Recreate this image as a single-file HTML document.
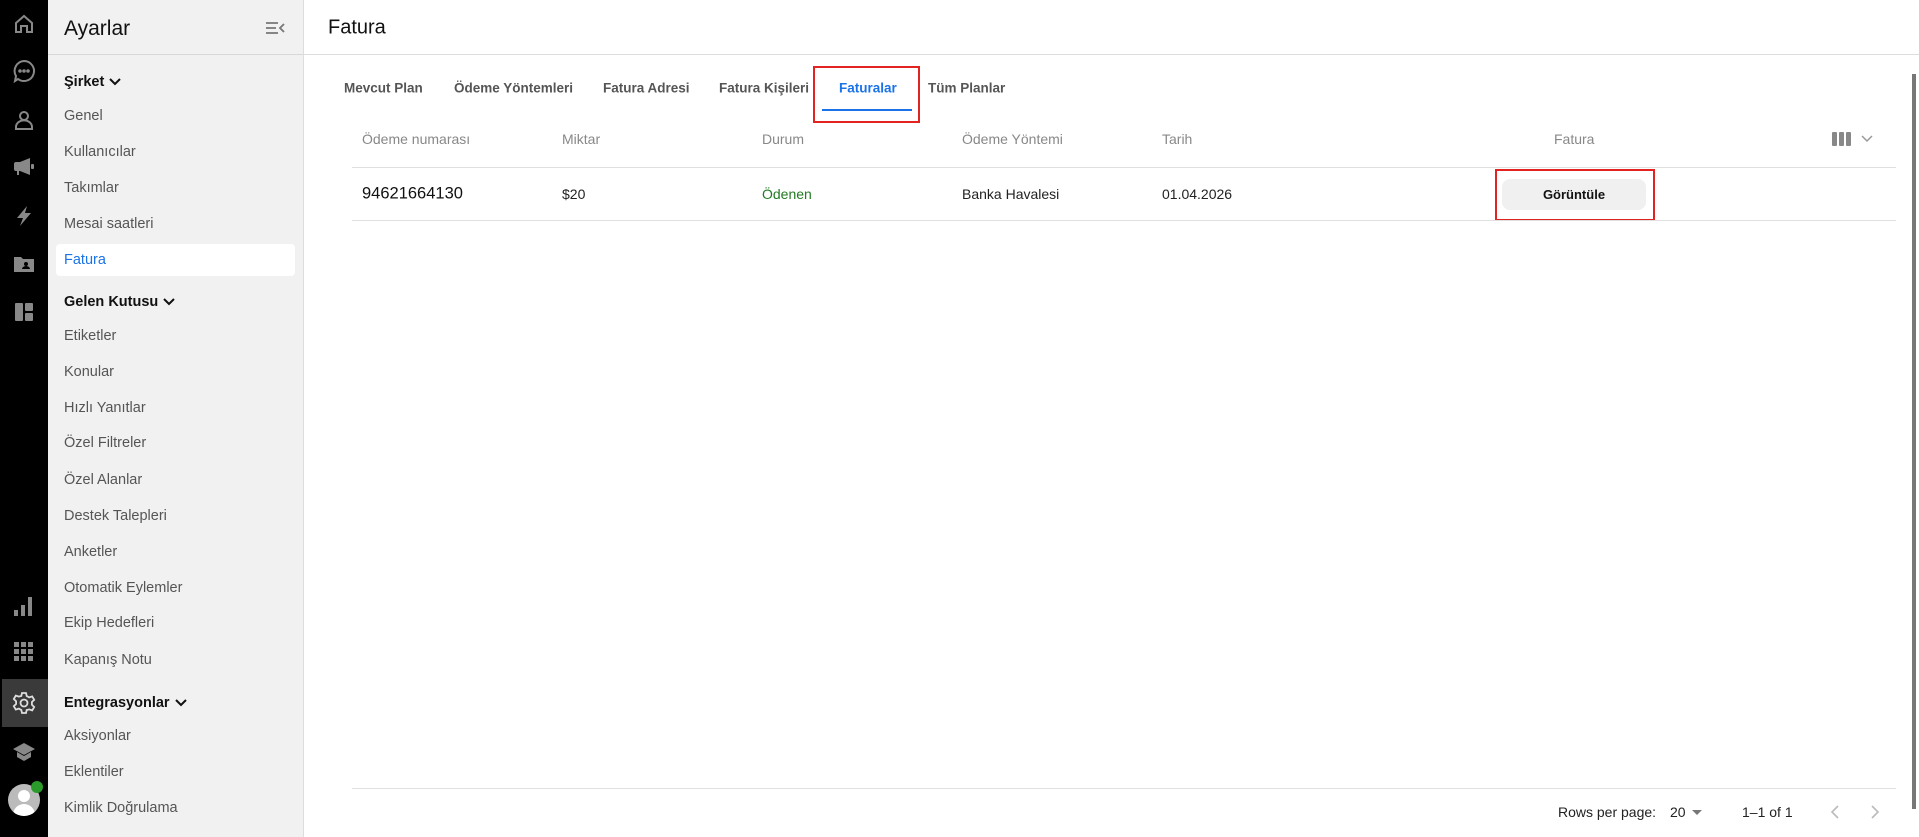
<!DOCTYPE html>
<html><head><meta charset="utf-8"><style>
*{margin:0;padding:0;box-sizing:border-box}
body{width:1919px;height:837px;overflow:hidden;font-family:"Liberation Sans",Roboto,sans-serif;background:#fff;position:relative}
.bar{position:absolute;left:0;top:0;width:48px;height:837px;background:#000}
.bar svg{position:absolute;left:12px}
.side{position:absolute;left:48px;top:0;width:256px;height:837px;background:#f1f1f1;border-right:1px solid #ddd}
.side .h{position:absolute;left:16px;top:17px;font-size:21px;color:#111}
.side .hl{position:absolute;left:0;top:54px;width:255px;height:1px;background:#d8d8d8}
.it{position:absolute;left:16px;font-size:14.5px;color:#555;transform:translateY(-50%)}
.sec{position:absolute;left:16px;font-size:14.5px;color:#111;font-weight:bold;transform:translateY(-50%)}
.sec svg{margin-left:5px;vertical-align:middle}
.sel{position:absolute;left:8px;top:244px;width:239px;height:32px;background:#fff;border-radius:4px}
.t{position:absolute;transform:translateY(-50%);white-space:nowrap}
.tab{font-size:13.5px;font-weight:bold;color:#555}
.th{font-size:14px;color:#888}
.td{font-size:14px;color:#222}
.line{position:absolute;height:1px;background:#e0e0e0}
</style></head><body>
<div class="bar">
<svg style="top:12px" width="24" height="24" viewBox="0 0 24 24" fill="none" stroke="#888" stroke-width="2"><path d="M4 11 12 4l8 7v9h-5v-6h-6v6H4z"/></svg>
<svg style="top:59px" width="24" height="24" viewBox="0 0 24 24" fill="none" stroke="#888" stroke-width="2"><path d="M12 2a10 10 0 1 1-6 18l-3 2 1-5A10 10 0 0 1 12 2z"/><circle cx="8" cy="12" r=".8" fill="#888"/><circle cx="12" cy="12" r=".8" fill="#888"/><circle cx="16" cy="12" r=".8" fill="#888"/></svg>
<svg style="top:108px" width="24" height="24" viewBox="0 0 24 24" fill="none" stroke="#888" stroke-width="2"><circle cx="12" cy="8" r="4"/><path d="M4 21v-2a6 5 0 0 1 16 0v2z"/></svg>
<svg style="top:155px" width="24" height="24" viewBox="0 0 24 24" fill="#888"><path d="M2 9a2 2 0 0 1 2-2h4l10-4v17L8 16H7v4H5v-4H4a2 2 0 0 1-2-2z"/><rect x="19" y="9" width="3" height="5" rx="1"/></svg>
<svg style="top:204px" width="24" height="24" viewBox="0 0 24 24" fill="#888"><path d="M15 2 5 14h6l-3 8 11-13h-6z"/></svg>
<svg style="top:252px" width="24" height="24" viewBox="0 0 24 24" fill="#888"><path d="M2 5h7l2 2h11v13H2z"/><circle cx="14" cy="12" r="2" fill="#000"/><path d="M10 17a4 3 0 0 1 8 0z" fill="#000"/></svg>
<svg style="top:300px" width="24" height="24" viewBox="0 0 24 24" fill="#888"><rect x="3" y="3" width="8" height="18" rx="1"/><rect x="13" y="3" width="8" height="8" rx="1"/><rect x="13" y="13" width="8" height="8" rx="1"/></svg>
<svg style="top:594px" width="24" height="24" viewBox="0 0 24 24" fill="#888"><rect x="2" y="16" width="4" height="6"/><rect x="9" y="11" width="4" height="11"/><rect x="16" y="3" width="4" height="19"/></svg>
<svg style="top:640px" width="24" height="24" viewBox="0 0 24 24" fill="#888"><rect x="2" y="2" width="5" height="5"/><rect x="9" y="2" width="5" height="5"/><rect x="16" y="2" width="5" height="5"/><rect x="2" y="9" width="5" height="5"/><rect x="9" y="9" width="5" height="5"/><rect x="16" y="9" width="5" height="5"/><rect x="2" y="16" width="5" height="5"/><rect x="9" y="16" width="5" height="5"/><rect x="16" y="16" width="5" height="5"/></svg>
<div style="position:absolute;left:2px;top:679px;width:46px;height:48px;background:#3a3a3a"></div>
<svg style="top:691px" width="24" height="24" viewBox="0 0 24 24" fill="none" stroke="#ddd" stroke-width="1.8"><circle cx="12" cy="12" r="3.5"/><path d="M10 2h4l.7 3 2.5 1.4 3-1 2 3.4-2.3 2.2v2.8l2.3 2.2-2 3.4-3-1L14.7 19 14 22h-4l-.7-3-2.5-1.4-3 1-2-3.4L4.1 13v-2.8L1.8 8l2-3.4 3 1L9.3 5z"/></svg>
<svg style="top:740px" width="24" height="24" viewBox="0 0 24 24" fill="#888"><path d="M12 3 1 9l11 6 11-6z"/><path d="M5 12v5l7 4 7-4v-5l-7 4z"/></svg>
<div style="position:absolute;left:8px;top:784px;width:32px;height:32px;border-radius:50%;background:#bbb;overflow:hidden"><div style="position:absolute;left:10px;top:6px;width:12px;height:12px;border-radius:50%;background:#fff"></div><div style="position:absolute;left:5px;top:20px;width:22px;height:14px;border-radius:11px 11px 0 0;background:#fff"></div></div>
<div style="position:absolute;left:31px;top:781px;width:12px;height:12px;border-radius:50%;background:#2a9a2a"></div>
</div>
<div class="side">
<div class="h">Ayarlar</div>
<svg style="position:absolute;left:217px;top:21px" width="20" height="14" viewBox="0 0 20 14" fill="none" stroke="#777" stroke-width="1.8"><path d="M1 2h12M1 7h10M1 12h12M19 3l-4 4 4 4"/></svg>
<div class="hl"></div>
<div class="sel"></div>
<div class="sec" style="top:82px">Şirket<svg width="12" height="8" fill="none" stroke="#111" stroke-width="2"><path d="M1 1l5 5 5-5"/></svg></div>
<div class="it" style="top:116px">Genel</div>
<div class="it" style="top:152px">Kullanıcılar</div>
<div class="it" style="top:188px">Takımlar</div>
<div class="it" style="top:224px">Mesai saatleri</div>
<div class="it" style="top:260px;color:#1a73e8">Fatura</div>
<div class="sec" style="top:302px">Gelen Kutusu<svg width="12" height="8" fill="none" stroke="#111" stroke-width="2"><path d="M1 1l5 5 5-5"/></svg></div>
<div class="it" style="top:336px">Etiketler</div>
<div class="it" style="top:372px">Konular</div>
<div class="it" style="top:408px">Hızlı Yanıtlar</div>
<div class="it" style="top:443px">Özel Filtreler</div>
<div class="it" style="top:480px">Özel Alanlar</div>
<div class="it" style="top:516px">Destek Talepleri</div>
<div class="it" style="top:552px">Anketler</div>
<div class="it" style="top:588px">Otomatik Eylemler</div>
<div class="it" style="top:623px">Ekip Hedefleri</div>
<div class="it" style="top:660px">Kapanış Notu</div>
<div class="sec" style="top:703px">Entegrasyonlar<svg width="12" height="8" fill="none" stroke="#111" stroke-width="2"><path d="M1 1l5 5 5-5"/></svg></div>
<div class="it" style="top:736px">Aksiyonlar</div>
<div class="it" style="top:772px">Eklentiler</div>
<div class="it" style="top:808px">Kimlik Doğrulama</div>
</div>
<div class="t" style="left:328px;top:28px;font-size:20px;color:#111">Fatura</div>
<div class="line" style="left:304px;top:54px;width:1615px;background:#ddd"></div>
<div class="t tab" style="left:344px;top:88px">Mevcut Plan</div>
<div class="t tab" style="left:454px;top:88px">Ödeme Yöntemleri</div>
<div class="t tab" style="left:603px;top:88px">Fatura Adresi</div>
<div class="t tab" style="left:719px;top:88px">Fatura Kişileri</div>
<div class="t tab" style="left:839px;top:88px;color:#1a73e8">Faturalar</div>
<div class="t tab" style="left:928px;top:88px">Tüm Planlar</div>
<div style="position:absolute;left:822px;top:109px;width:90px;height:2px;background:#1a73e8"></div>
<div style="position:absolute;left:813px;top:66px;width:107px;height:57px;border:2px solid #e32222"></div>
<div class="t th" style="left:362px;top:139px">Ödeme numarası</div>
<div class="t th" style="left:562px;top:139px">Miktar</div>
<div class="t th" style="left:762px;top:139px">Durum</div>
<div class="t th" style="left:962px;top:139px">Ödeme Yöntemi</div>
<div class="t th" style="left:1162px;top:139px">Tarih</div>
<div class="t th" style="left:1554px;top:139px">Fatura</div>
<svg style="position:absolute;left:1832px;top:132px" width="20" height="14"><rect x="0" y="0" width="5" height="14" rx="1" fill="#888"/><rect x="7" y="0" width="5" height="14" rx="1" fill="#888"/><rect x="14" y="0" width="5" height="14" rx="1" fill="#888"/></svg>
<svg style="position:absolute;left:1861px;top:135px" width="12" height="8" fill="none" stroke="#999" stroke-width="1.5"><path d="M1 1l5 5 5-5"/></svg>
<div class="line" style="left:352px;top:167px;width:1544px"></div>
<div class="t" style="left:362px;top:194px;font-size:16.5px;color:#111">94621664130</div>
<div class="t td" style="left:562px;top:194px">$20</div>
<div class="t td" style="left:762px;top:194px;color:#237a23">Ödenen</div>
<div class="t td" style="left:962px;top:194px">Banka Havalesi</div>
<div class="t td" style="left:1162px;top:194px">01.04.2026</div>
<div style="position:absolute;left:1502px;top:179px;width:144px;height:31px;background:#f0f0f0;border-radius:8px;font-size:13px;font-weight:bold;color:#111;text-align:center;line-height:31px">Görüntüle</div>
<div style="position:absolute;left:1495px;top:169px;width:160px;height:52px;border:2px solid #e32222"></div>
<div class="line" style="left:352px;top:220px;width:1544px"></div>
<div class="line" style="left:352px;top:788px;width:1544px"></div>
<div class="t" style="left:1558px;top:812px;font-size:14px;color:#222">Rows per page:</div>
<div class="t" style="left:1670px;top:812px;font-size:14px;color:#222">20</div>
<svg style="position:absolute;left:1692px;top:810px" width="10" height="5"><path d="M0 0h10L5 5z" fill="#777"/></svg>
<div class="t" style="left:1742px;top:812px;font-size:14px;color:#222">1–1 of 1</div>
<svg style="position:absolute;left:1830px;top:805px" width="10" height="14" fill="none" stroke="#bbb" stroke-width="1.6"><path d="M8 1 2 7l6 6"/></svg>
<svg style="position:absolute;left:1870px;top:805px" width="10" height="14" fill="none" stroke="#bbb" stroke-width="1.6"><path d="M2 1l6 6-6 6"/></svg>
<div style="position:absolute;left:1912px;top:74px;width:4px;height:735px;background:#777"></div>
</body></html>
